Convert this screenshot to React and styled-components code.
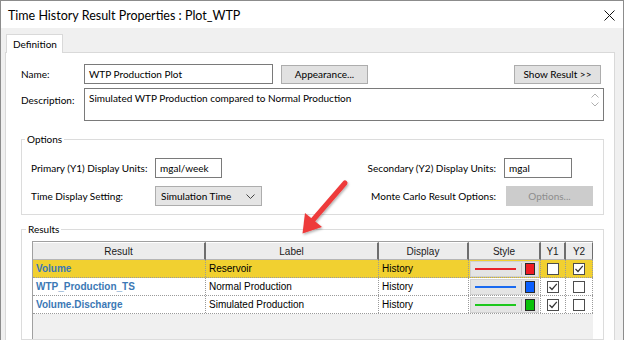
import React from "react";
import styled, { createGlobalStyle } from "styled-components";

const GlobalStyle = createGlobalStyle`
  html, body { margin: 0; padding: 0; background: #ffffff; }
  body { font-family: "Lato", "Noto Sans", sans-serif; }
  * { box-sizing: border-box; }
`;

const Window = styled.div`
  width: 624px;
  height: 340px;
  display: flex;
  flex-direction: column;
  border: 1px solid #8c8c8c;
  border-bottom: none;
  overflow: hidden;
  position: relative;
  background: #f0f0f0;
`;

const TitleBar = styled.div`
  height: 27px;
  flex: none;
  background: #ffffff;
  display: flex;
  align-items: center;
  justify-content: space-between;
  padding: 1px 8px 0 7px;
  font-size: 12.5px;
  color: #000;
`;

const CloseBtn = styled.div`
  width: 12px;
  height: 12px;
  display: flex;
  align-items: center;
  justify-content: center;
`;

const Body = styled.div`
  flex: 1;
  display: flex;
  flex-direction: column;
  padding: 6px 8px 0 4px;
  min-height: 0;
`;

const TabStrip = styled.div`
  display: flex;
  padding-left: 1px;
  height: 19px;
  flex: none;
  position: relative;
  z-index: 1;
  margin-bottom: -1px;
`;

const Tab = styled.div`
  background: #ffffff;
  border: 1px solid #d9d9d9;
  border-bottom: none;
  padding: 3px 5px 0 6px;
  font-size: 10px;
  height: 19px;
`;

const Panel = styled.div`
  flex: 1;
  background: #ffffff;
  border: 1px solid #d9d9d9;
  border-bottom: none;
  padding: 11px 10px 0 15px;
  display: flex;
  flex-direction: column;
  min-height: 0;
`;

const Row = styled.div`
  display: flex;
  align-items: ${(p) => p.$align || "center"};
  margin-bottom: ${(p) => p.$mb || 0}px;
`;

const Label = styled.div`
  font-size: 10px;
  width: ${(p) => (p.$w ? p.$w + "px" : "auto")};
  text-align: ${(p) => (p.$right ? "right" : "left")};
  padding-top: ${(p) => p.$pt || 0}px;
  padding-right: ${(p) => p.$pr || 0}px;
  flex: none;
  white-space: nowrap;
`;

const TextBox = styled.div`
  width: ${(p) => p.$w}px;
  height: ${(p) => p.$h || 20}px;
  border: 1px solid #7a7a7a;
  background: #fff;
  font-size: 10px;
  padding: ${(p) => (p.$multi ? "3px 4px" : "0 4px")};
  display: flex;
  align-items: ${(p) => (p.$multi ? "flex-start" : "center")};
  justify-content: space-between;
  flex: none;
`;

const ScrollArrows = styled.div`
  display: flex;
  flex-direction: column;
  gap: 4px;
  padding-top: 1px;
`;

const Button = styled.div`
  width: ${(p) => p.$w}px;
  height: ${(p) => p.$h || 19}px;
  margin-left: ${(p) => p.$ml || 0}px;
  margin-right: ${(p) => p.$mr || 0}px;
  border: 1px solid ${(p) => (p.$disabled ? "#cccccc" : "#adadad")};
  background: ${(p) => (p.$disabled ? "#cccccc" : "#e1e1e1")};
  color: ${(p) => (p.$disabled ? "#8c8c8c" : "#000")};
  font-size: 10px;
  display: flex;
  align-items: center;
  justify-content: center;
  flex: none;
`;

const Select = styled.div`
  width: 107px;
  height: 20px;
  border: 1px solid #adadad;
  background: #e5e5e5;
  font-size: 10px;
  display: flex;
  align-items: center;
  justify-content: space-between;
  padding: 0 6px 0 5px;
  flex: none;
`;

const Group = styled.fieldset`
  margin: 0;
  border: 1px solid #dcdcdc;
  padding: ${(p) => p.$pad};
  width: 583px;
  flex: ${(p) => (p.$grow ? 1 : "none")};
  min-height: 0;
  display: flex;
  flex-direction: column;
  margin-top: ${(p) => p.$mt || 0}px;
  & > legend {
    font-size: 10px;
    padding: 0 2px;
    margin-left: ${(p) => p.$lm || 0}px;
  }
`;

const OptGrid = styled.div`
  display: grid;
  grid-template-columns: 124px 107px minmax(0, 1fr) 88px;
  grid-auto-rows: 20px;
  row-gap: 8px;
  align-items: center;
`;

const Spacer = styled.div`
  flex: 1;
`;

const Table = styled.div`
  width: 561px;
  flex: 1;
  background: #f0f0f0;
  border-left: 1px solid #a0a0a0;
  border-top: 1px solid #a0a0a0;
  display: flex;
  flex-direction: column;
  font-family: "Liberation Sans", Arial, sans-serif;
  font-size: 10px;
`;

const cols = "173px 173px 90px 72px 25px 27px";

const HeadRow = styled.div`
  display: grid;
  grid-template-columns: ${cols};
  height: 18px;
  background: #ececec;
`;

const HeadCell = styled.div`
  border-right: 2px solid #6e6e6e;
  border-bottom: 1px solid #b5b5b5;
  border-top: 1px solid #ffffff;
  display: flex;
  align-items: center;
  justify-content: center;
  color: #1a1a1a;
  &:last-child { border-right: 1px solid #6e6e6e; }
`;

const DataRow = styled.div`
  display: grid;
  grid-template-columns: ${cols};
  height: 18px;
  background: ${(p) => (p.$selected ? "#f1d030" : "#ffffff")};
  border-bottom: 1px dotted #9a9a9a;
`;

const Cell = styled.div`
  border-right: 1px dotted #9a9a9a;
  display: flex;
  align-items: center;
  justify-content: ${(p) => (p.$center ? "center" : "flex-start")};
  padding-left: ${(p) => (p.$center ? 0 : 3)}px;
  color: ${(p) => (p.$link ? "#3b78b5" : "#000")};
  font-weight: ${(p) => (p.$link ? 700 : 400)};
  white-space: nowrap;
  overflow: hidden;
`;

const StyleBox = styled.div`
  width: 69px;
  height: 16px;
  background: #e4e4e4;
  border: 1px solid #d0d0d0;
  display: flex;
  align-items: center;
  padding: 0 3px 0 4px;
  gap: 3px;
`;

const LineSample = styled.div`
  width: 43px;
  height: 2px;
  background: ${(p) => p.$c};
`;

const Divider = styled.div`
  width: 1px;
  height: 12px;
  background: #bdbdbd;
  margin-left: 2px;
`;

const Swatch = styled.div`
  width: 11px;
  height: 12px;
  background: ${(p) => p.$c};
  border: 1px solid #2a2a2a;
`;

const Check = styled.div`
  width: 12px;
  height: 12px;
  border: 1px solid #4d4d4d;
  background: #fff;
  display: flex;
  align-items: center;
  justify-content: center;
`;

const ArrowLayer = styled.svg`
  position: absolute;
  left: 0;
  top: 0;
  pointer-events: none;
`;

const Chevron = ({ up }) => (
  <svg width="8" height="5" viewBox="0 0 8 5">
    <path d={up ? "M0.5 4.5 L4 1 L7.5 4.5" : "M0.5 0.5 L4 4 L7.5 0.5"} fill="none" stroke="#b0b0b0" strokeWidth="1" />
  </svg>
);

const Tick = () => (
  <svg width="10" height="10" viewBox="0 0 10 10">
    <path d="M1.5 5 L4 7.5 L8.8 1.8" fill="none" stroke="#333" strokeWidth="1.2" />
  </svg>
);

const rows = [
  { r: "Volume", l: "Reservoir", c: "#e8232a", sw: "#ee1c24", y1: false, y2: true, sel: true },
  { r: "WTP_Production_TS", l: "Normal Production", c: "#1a6af0", sw: "#0a5fff", y1: true, y2: false },
  { r: "Volume.Discharge", l: "Simulated Production", c: "#1ec81e", sw: "#0ac20a", y1: true, y2: false },
];

export default function App() {
  return (
    <>
      <GlobalStyle />
      <Window>
        <TitleBar>
          <span>Time History Result Properties : Plot_WTP</span>
          <CloseBtn>
            <svg width="11" height="11" viewBox="0 0 11 11">
              <path d="M0.5 0.5 L10.5 10.5 M10.5 0.5 L0.5 10.5" stroke="#111" strokeWidth="1" />
            </svg>
          </CloseBtn>
        </TitleBar>
        <Body>
          <TabStrip>
            <Tab>Definition</Tab>
          </TabStrip>
          <Panel>
            <Row $mb={4}>
              <Label $w={63}>Name:</Label>
              <TextBox $w={189}>WTP Production Plot</TextBox>
              <Button $w={87} $ml={8}>Appearance...</Button>
              <Spacer />
              <Button $w={87} $mr={3}>Show Result &gt;&gt;</Button>
            </Row>
            <Row $align="flex-start">
              <Label $w={63} $pt={6}>Description:</Label>
              <TextBox $w={520} $h={33} $multi>
                <span>Simulated WTP Production compared to Normal Production</span>
                <ScrollArrows>
                  <Chevron up />
                  <Chevron />
                </ScrollArrows>
              </TextBox>
            </Row>
            <Group $pad="13px 11px 8px 9px" $mt={12} $lm={-6}>
              <legend>Options</legend>
              <OptGrid>
                <Label>Primary (Y1) Display Units:</Label>
                <TextBox $w={67}>mgal/week</TextBox>
                <Label $right $pr={8}>Secondary (Y2) Display Units:</Label>
                <TextBox $w={68}>mgal</TextBox>
                <Label>Time Display Setting:</Label>
                <Select>
                  <span>Simulation Time</span>
                  <svg width="9" height="5" viewBox="0 0 9 5">
                    <path d="M0.5 0.5 L4.5 4.5 L8.5 0.5" fill="none" stroke="#444" strokeWidth="1" />
                  </svg>
                </Select>
                <Label $right $pr={8}>Monte Carlo Result Options:</Label>
                <Button $w={87} $h={20} $ml={2} $disabled>Options...</Button>
              </OptGrid>
            </Group>
            <Group $pad="6px 10px 0 10px" $mt={8} $lm={-6} $grow>
              <legend>Results</legend>
              <Table>
                <HeadRow>
                  <HeadCell>Result</HeadCell>
                  <HeadCell>Label</HeadCell>
                  <HeadCell>Display</HeadCell>
                  <HeadCell>Style</HeadCell>
                  <HeadCell>Y1</HeadCell>
                  <HeadCell>Y2</HeadCell>
                </HeadRow>
                {rows.map((r) => (
                  <DataRow key={r.r} $selected={r.sel}>
                    <Cell $link>{r.r}</Cell>
                    <Cell>{r.l}</Cell>
                    <Cell>History</Cell>
                    <Cell $center>
                      <StyleBox>
                        <LineSample $c={r.c} />
                        <Divider />
                        <Swatch $c={r.sw} />
                      </StyleBox>
                    </Cell>
                    <Cell $center>
                      <Check>{r.y1 && <Tick />}</Check>
                    </Cell>
                    <Cell $center>
                      <Check>{r.y2 && <Tick />}</Check>
                    </Cell>
                  </DataRow>
                ))}
              </Table>
            </Group>
          </Panel>
        </Body>
        <ArrowLayer width="624" height="340" viewBox="0 0 624 340">
          <defs>
            <filter id="sh" x="-20%" y="-20%" width="140%" height="140%">
              <feDropShadow dx="1" dy="1.5" stdDeviation="1.2" floodColor="#000" floodOpacity="0.3" />
            </filter>
          </defs>
          <g filter="url(#sh)" fill="#ee3b3b" stroke="none">
            <path d="M344 182 L312 219" stroke="#ee3b3b" strokeWidth="5" strokeLinecap="round" />
            <path d="M301.5 232.5 L304 212 L321 226 Z" />
          </g>
        </ArrowLayer>
      </Window>
    </>
  );
}
